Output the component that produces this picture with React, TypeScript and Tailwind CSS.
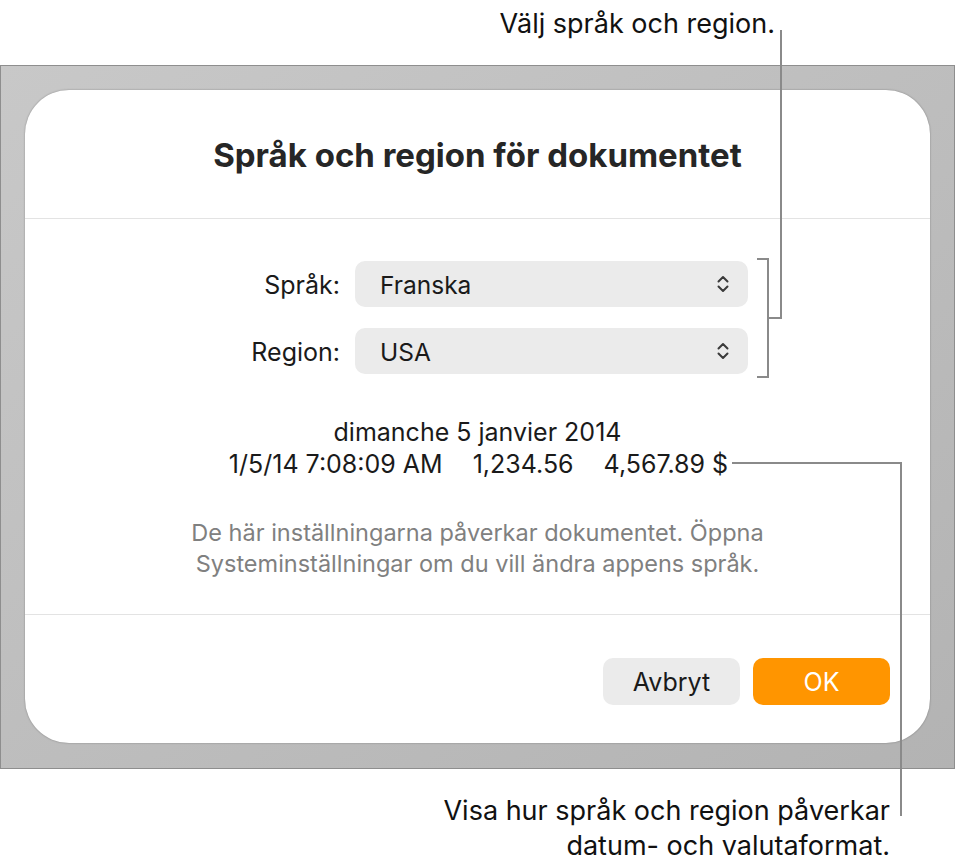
import React from "react";

function UpDownChevron() {
  return (
    <svg width="14" height="20" viewBox="0 0 14 20" fill="none" className="shrink-0">
      <path d="M2.5 7.5 L7 3 L11.5 7.5" stroke="#3a3a3a" strokeWidth="2" strokeLinecap="round" strokeLinejoin="round" />
      <path d="M2.5 12.5 L7 17 L11.5 12.5" stroke="#3a3a3a" strokeWidth="2" strokeLinecap="round" strokeLinejoin="round" />
    </svg>
  );
}

function PopupRow({ label, value }: { label: string; value: string }) {
  return (
    <div className="flex items-center">
      <span className="w-[100px] pt-[3px] text-right text-[25px] text-[#1a1a1a]">{label}</span>
      <div className="ml-[15px] flex h-[46px] w-[393px] items-center justify-between rounded-[10px] bg-[#ebebeb] pl-[25px] pr-[18px]">
        <span className="pt-[3px] text-[24.5px] text-[#1a1a1a]">{value}</span>
        <UpDownChevron />
      </div>
    </div>
  );
}

export default function App() {
  return (
    <div className="relative h-[867px] w-[955px] overflow-hidden bg-white font-[Inter,sans-serif]">
      {/* caption above the window */}
      <div className="flex h-[65px] justify-end pr-[180px] pt-[6px]">
        <span className="text-[27px] leading-[36px] text-[#111]">Välj språk och region.</span>
      </div>

      {/* grey backdrop with the sheet */}
      <div className="h-[704px] border border-[#8e8e8e] bg-linear-to-br from-[#c8c8c8] to-[#b3b3b3] pl-[24px] pt-[24px]">
        <div className="flex h-[653px] w-[905px] flex-col rounded-[44px] bg-white shadow-[0_0_2px_rgba(0,0,0,0.35)]">
          <div className="flex h-[129px] items-center justify-center border-b border-[#e3e3e3] pt-[4px]">
            <h1 className="text-[33px] font-bold text-[#262626]">Språk och region för dokumentet</h1>
          </div>

          <div className="flex flex-1 flex-col border-b border-[#e3e3e3] pl-[215px] pt-[42px]">
            <div className="flex flex-col gap-[21px]">
              <PopupRow label="Språk:" value="Franska" />
              <PopupRow label="Region:" value="USA" />
            </div>
          </div>

          <div className="flex h-[128px] items-center justify-end gap-[13px] pr-[40px] pt-[4px]">
            <button className="h-[47px] w-[137px] rounded-[10px] bg-[#ebebeb] pt-[3px] text-[25px] text-[#1a1a1a]">Avbryt</button>
            <button className="h-[47px] w-[137px] rounded-[10px] bg-[#ff9500] pt-[3px] text-[25px] text-white">OK</button>
          </div>
        </div>
      </div>

      {/* caption below the window */}
      <div className="flex flex-col items-end pr-[65px] pt-[24px] text-[27px] leading-[35px] text-[#111]">
        <span>Visa hur språk och region påverkar</span>
        <span>datum- och valutaformat.</span>
      </div>

      {/* sample formats inside the sheet */}
      <div className="absolute left-[25px] top-[416px] flex w-[905px] flex-col items-center text-[25px] leading-[32px] text-[#1a1a1a]">
        <span>dimanche 5 janvier 2014</span>
        <span className="flex gap-[30px] pl-[2px]">
          <span>1/5/14 7:08:09 AM</span>
          <span>1,234.56</span>
          <span>4,567.89 $</span>
        </span>
        <p className="mt-[37px] text-center text-[23.5px] leading-[31px] text-[#808080]">
          De här inställningarna påverkar dokumentet. Öppna
          <br />
          Systeminställningar om du vill ändra appens språk.
        </p>
      </div>

      {/* callout lines */}
      <div className="absolute left-[780px] top-[30px] h-[289px] w-[2px] bg-[#8a8a8a]" />
      <div className="absolute left-[767px] top-[317px] h-[2px] w-[15px] bg-[#8a8a8a]" />
      <div className="absolute left-[767px] top-[258px] h-[120px] w-[2px] bg-[#8a8a8a]" />
      <div className="absolute left-[757px] top-[258px] h-[2px] w-[12px] bg-[#8a8a8a]" />
      <div className="absolute left-[757px] top-[376px] h-[2px] w-[12px] bg-[#8a8a8a]" />
      <div className="absolute left-[732px] top-[462px] h-[2px] w-[170px] bg-[#8a8a8a]" />
      <div className="absolute left-[900px] top-[462px] h-[354px] w-[2px] bg-[#8a8a8a]" />
    </div>
  );
}
